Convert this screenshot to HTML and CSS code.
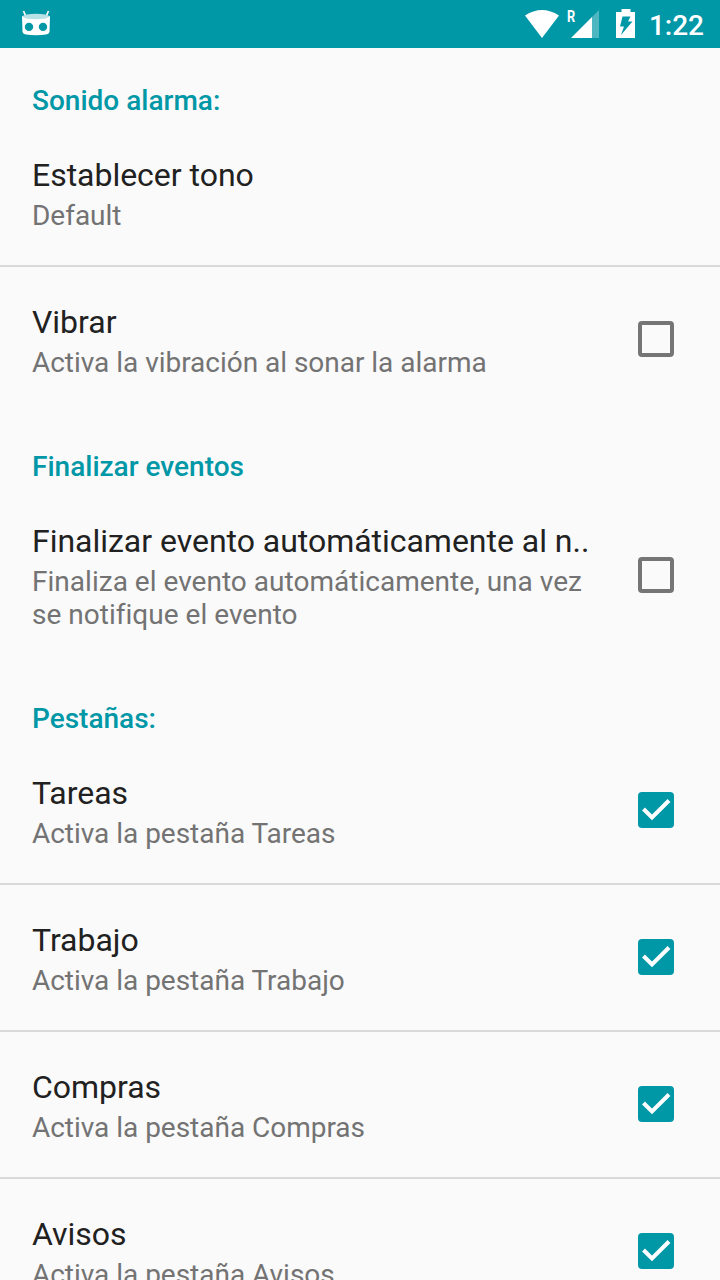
FILE: index.html
```html
<!DOCTYPE html>
<html lang="es">
<head>
<meta charset="utf-8">
<title>Ajustes</title>
<link rel="stylesheet" href="styles.css">
</head>
<body>
<header class="status-bar">
<svg class="robot" viewBox="0 0 30 28"><path d="M4.500 5.500 2.500 1M25.500 5.500l2-4.500" stroke="#fff" stroke-width="1.700"/><path fill="#fff" fill-rule="evenodd" d="M1 6Q15 12 29 6L28.500 22Q28 24 25 24.500Q15 26 5 24.500Q2 24 1.500 22ZM8 12.700a4.200 4.200 0 1 0 0 8.400a4.200 4.200 0 1 0 0-8.400ZM22 12.700a4.200 4.200 0 1 0 0 8.400a4.200 4.200 0 1 0 0-8.400Z"/><ellipse cx="15" cy="6.500" rx="13" ry="2.700" fill="#b9e2e6"/></svg>
<div class="status-icons">
<svg class="wifi" viewBox="0 0 34 28"><path fill="#fff" d="M0 5.500Q17-5.500 34 5.500L17 28Z"/></svg>
<span class="roaming">R</span>
<svg class="signal" viewBox="0 0 28 28"><path fill="#fff" opacity=".3" d="M28 0V28H21V7Z"/><path fill="#fff" d="M21 7V28H0Z"/></svg>
<svg class="battery" viewBox="0 0 20 30"><path fill="#fff" d="M5.500 0h9v3H19v26H0V3h5.500Z"/><path fill="#0097a7" d="M6.500 7.500h8l-2.500 5h4.500L5 26l3-8.500H4Z"/></svg>
<span class="clock">1:22</span>
</div>
</header>
<main class="settings">
<h2 class="category">Sonido alarma:</h2>
<section class="row"><div class="copy"><h3 class="title">Establecer tono</h3><p class="summary">Default</p></div></section>
<section class="row divided"><div class="copy"><h3 class="title">Vibrar</h3><p class="summary">Activa la vibración al sonar la alarma</p></div><span class="box"></span></section>
<h2 class="category spaced">Finalizar eventos</h2>
<section class="row tall"><div class="copy"><h3 class="title">Finalizar evento automáticamente al n..</h3><p class="summary">Finaliza el evento automáticamente, una vez<br>se notifique el evento</p></div><span class="box"></span></section>
<h2 class="category spaced">Pestañas:</h2>
<section class="row"><div class="copy"><h3 class="title">Tareas</h3><p class="summary">Activa la pestaña Tareas</p></div><svg class="check" viewBox="0 0 36 36"><rect width="36" height="36" rx="4"/><path d="M5.500 17 14 25.500 31 8.500"/></svg></section>
<section class="row divided"><div class="copy"><h3 class="title">Trabajo</h3><p class="summary">Activa la pestaña Trabajo</p></div><svg class="check" viewBox="0 0 36 36"><rect width="36" height="36" rx="4"/><path d="M5.500 17 14 25.500 31 8.500"/></svg></section>
<section class="row divided"><div class="copy"><h3 class="title">Compras</h3><p class="summary">Activa la pestaña Compras</p></div><svg class="check" viewBox="0 0 36 36"><rect width="36" height="36" rx="4"/><path d="M5.500 17 14 25.500 31 8.500"/></svg></section>
<section class="row divided"><div class="copy"><h3 class="title">Avisos</h3><p class="summary">Activa la pestaña Avisos</p></div><svg class="check" viewBox="0 0 36 36"><rect width="36" height="36" rx="4"/><path d="M5.500 17 14 25.500 31 8.500"/></svg></section>
</main>
</body>
</html>
```
FILE: styles.css
```css
* { box-sizing: border-box; }
body { margin: 0; width: 720px; height: 1280px; overflow: hidden; background: #fafafa; font-family: Roboto, "Liberation Sans", sans-serif; }
.status-bar { height: 48px; background: #0097a7; padding: 0 16px 0 21px; display: flex; align-items: center; justify-content: space-between; color: #fff; }
.robot { width: 30px; height: 28px; }
.status-icons { display: flex; align-items: center; }
.wifi { width: 34px; height: 28px; }
.roaming { width: 12px; margin: 0 -8px 14px 8px; font-size: 16px; line-height: 16px; font-weight: 700; transform: scaleX(.8); transform-origin: left; }
.signal { width: 28px; height: 28px; }
.battery { width: 20px; height: 30px; margin: 0 13px 0 17px; }
.clock { padding-top: 3px; font-size: 28px; font-weight: 500; line-height: 45px; }
.category { margin: 0; padding: 36px 32px 0; height: 72px; font-size: 28px; line-height: 33px; font-weight: 500; color: #0097a7; }
.spaced { margin-top: 2px; }
.row { display: flex; align-items: center; justify-content: space-between; height: 145px; padding: 0 46px 1px 32px; }
.divided { height: 147px; border-top: 2px solid #dadada; }
.tall { height: 178px; padding-bottom: 0; }
.copy { align-self: flex-start; padding-top: 34px; }
.title, .summary { margin: 0; font-weight: 400; white-space: nowrap; letter-spacing: -.025px; }
.title { margin-bottom: 2px; font-size: 32px; line-height: 43px; color: #212121; }
.summary { font-size: 28px; line-height: 33px; color: #737373; }
.tall .summary { letter-spacing: .02px; }
.box { width: 36px; height: 36px; border: 4px solid #757575; border-radius: 4px; }
.check { width: 36px; height: 36px; fill: #0097a7; }
.check path { fill: none; stroke: #fff; stroke-width: 4; }
```
